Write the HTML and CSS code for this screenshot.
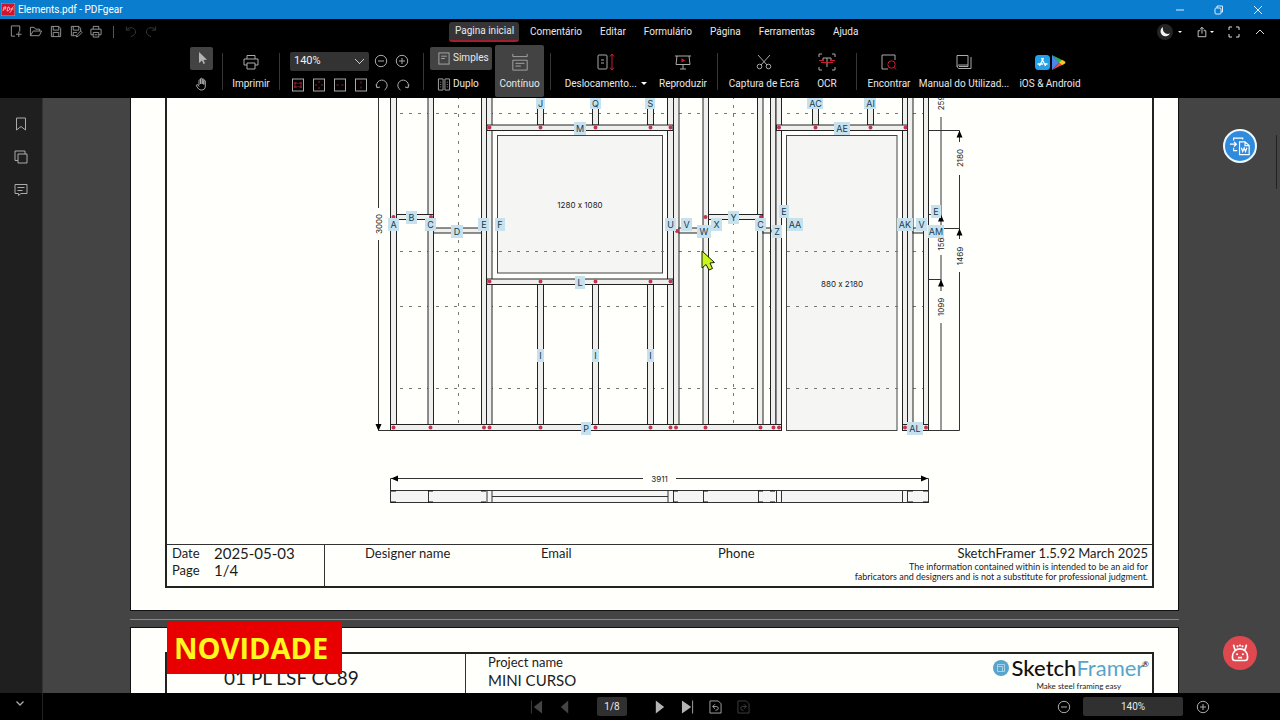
FILE: index.html
```html
<!DOCTYPE html>
<html lang="pt">
<head>
<meta charset="utf-8">
<title>Elements.pdf - PDFgear</title>
<link rel="stylesheet" href="styles.css">
</head>
<body>
<svg class="defs" aria-hidden="true">
  <defs>
    <symbol id="zoom-out" viewBox="0 0 14 14"><circle cx="7" cy="7" r="5.7"/><path d="M4 7h6"/></symbol>
    <symbol id="zoom-in" viewBox="0 0 14 14"><circle cx="7" cy="7" r="5.7"/><path d="M4 7h6M7 4v6"/></symbol>
    <symbol id="printer" viewBox="0 0 16 16"><path d="M4 5V1.500h8V5M4 11H1V5h14v6h-3M4 9h8v6H4z"/></symbol>
  </defs>
</svg>
<div class="app">
  <header class="titlebar">
    <svg class="app-icon" viewBox="0 0 14 13"><rect width="14" height="13" rx="1" fill="#d3122c"/><path d="M2 8l1-4h2L4.500 6H3M6 8l1-4c3 0 2 4-1 4M8.500 9.500c2 0 2-5 4-6M9.500 6h3" fill="none" stroke="#ffd5d8" stroke-width=".8"/></svg>
    <span class="title">Elements.pdf - PDFgear</span>
    <div class="window-buttons">
      <button aria-label="Minimizar"><svg viewBox="0 0 12 12"><path d="M2 6h8"/></svg></button>
      <button aria-label="Restaurar"><svg viewBox="0 0 12 12"><rect x="2" y="4" width="6" height="6" rx="1"/><path d="M4 4V2h5.500v6H8"/></svg></button>
      <button aria-label="Fechar"><svg viewBox="0 0 12 12"><path d="M2 2l8 8M10 2l-8 8"/></svg></button>
    </div>
  </header>

  <div class="menubar">
    <div class="quick">
      <button aria-label="Novo"><svg viewBox="0 0 14 14"><path d="M6 12H2V1h9v6M10 7v6M7 10h6"/></svg></button>
      <button aria-label="Abrir"><svg viewBox="0 0 14 14"><path d="M1 11.500V2.500h4l1.500 2H11v2M1 11.500l3-5h9l-2.500 5z"/></svg></button>
      <button aria-label="Guardar"><svg viewBox="0 0 14 14"><path d="M2 1.500h8l2 2v9H2zM4 1.500v4h6v-4M4 12v-4h6v4"/></svg></button>
      <button aria-label="Guardar como"><svg viewBox="0 0 14 14"><path d="M7 11.500H2v-10h8l2 2v3M4 1.500v4h6v-4M4 11V8h4M7.500 13l.5-2.500 4-4L13.500 8l-4 4z"/></svg></button>
      <button aria-label="Imprimir"><svg viewBox="0 0 14 14"><path d="M4 4.500v-3h6v3M4 10.500H1.500v-6h11v6H10M4 8h6v5H4zM5.500 10.500h3"/></svg></button>
      <span class="quick-line"></span>
      <button class="dim" aria-label="Anular"><svg viewBox="0 0 14 14"><path d="M2 1.500v4h4M2 5.500c4-5 10-2 10 2 0 2-2 4-5 5"/></svg></button>
      <button class="dim" aria-label="Refazer"><svg viewBox="0 0 14 14"><path d="M12 1.500v4H8M12 5.500c-4-5-10-2-10 2 0 2 2 4 5 5"/></svg></button>
    </div>
    <nav class="tabs">
      <button class="tab active">Pagina inicial</button>
      <button class="tab">Comentário</button>
      <button class="tab">Editar</button>
      <button class="tab">Formulário</button>
      <button class="tab">Página</button>
      <button class="tab">Ferramentas</button>
      <button class="tab">Ajuda</button>
    </nav>
    <div class="menu-right">
      <button class="theme" aria-label="Tema"><svg class="moon" viewBox="0 0 16 16"><circle class="disc" cx="8" cy="8" r="8"/><path class="crescent" d="M6 3a5 5 0 1 0 7 6.500C9 11 5 8 6 3z"/></svg><span class="caret"></span></button>
      <button class="share" aria-label="Partilhar"><svg viewBox="0 0 12 14"><path d="M4 5.500H1.500v7h9v-7H8M6 9V1.500M3.500 4L6 1.500 8.500 4"/></svg><span class="caret small"></span></button>
      <button aria-label="Ecrã inteiro"><svg viewBox="0 0 12 12"><path d="M1 4V1h3M8 1h3v3M11 8v3H8M4 11H1V8"/></svg></button>
      <button aria-label="Recolher"><svg viewBox="0 0 12 12"><path d="M2 8l4-4 4 4"/></svg></button>
    </div>
  </div>

  <div class="ribbon">
    <div class="pointer-group">
      <button class="mini on" aria-label="Selecionar"><svg viewBox="0 0 14 14"><path class="solid" d="M4 1v11l3-2.500 1.500 3.500 1.500-.7-1.500-3.300 3.500-.3z"/></svg></button>
      <button class="mini" aria-label="Mover"><svg viewBox="0 0 14 14"><path d="M4 8V3.500c0-1 1.500-1 1.500 0V7 2c0-1 1.700-1 1.700 0v5-4.500c0-1 1.600-1 1.600 0V7.500 4c0-1 1.500-1 1.500 0v5c0 3-1.500 4-4 4-2 0-3-1-4.800-4C1 8 2 7 3 8l1 1.500"/></svg></button>
    </div>
    <span class="sep"></span>
    <button class="tool w44"><svg viewBox="0 0 16 16"><use href="#printer"/></svg><span>Imprimir</span></button>
    <span class="sep"></span>
    <div class="zoom-group">
      <div class="row">
        <select class="zoom-select" aria-label="Zoom"><option>140%</option></select>
        <button class="zbtn" aria-label="Reduzir"><svg viewBox="0 0 14 14"><use href="#zoom-out"/></svg></button>
        <button class="zbtn" aria-label="Ampliar"><svg viewBox="0 0 14 14"><use href="#zoom-in"/></svg></button>
      </div>
      <div class="row fits">
        <button class="zbtn" aria-label="Tamanho real"><svg viewBox="0 0 14 14"><rect x="1.500" y="1" width="11" height="12"/><path class="red" d="M4 4v6M10 4v6M3 5h3M8 5h3M3 9h3M8 9h3M7 5v1M7 8v1"/></svg></button>
        <button class="zbtn" aria-label="Ajustar página"><svg viewBox="0 0 14 14"><rect x="1.500" y="1" width="11" height="12"/><path class="red" d="M6 4h2M6 10h2M4 6v2M10 6v2"/></svg></button>
        <button class="zbtn" aria-label="Ajustar largura"><svg viewBox="0 0 14 14"><rect x="1.500" y="1" width="11" height="12"/><path class="red" d="M3.500 7h2M8.500 7h2"/></svg></button>
        <button class="zbtn" aria-label="Ajustar altura"><svg viewBox="0 0 14 14"><rect x="1.500" y="1" width="11" height="12"/><path class="red" d="M7 3.500v2M7 8.500v2"/></svg></button>
        <button class="zbtn" aria-label="Rodar à esquerda"><svg viewBox="0 0 14 14"><path d="M2 9.500a5.300 5.300 0 1 1 7.500 2.500M1 6.500l1 3.300L5 9"/></svg></button>
        <button class="zbtn" aria-label="Rodar à direita"><svg viewBox="0 0 14 14"><path d="M12 9.500A5.300 5.300 0 1 0 4.500 12M13 6.500l-1 3.300L9 9"/></svg></button>
      </div>
    </div>
    <span class="sep"></span>
    <div class="view-group">
      <button class="view on"><svg viewBox="0 0 14 14"><rect x="1.500" y="1" width="11" height="12"/><path d="M4 4.500h6M4 7h4"/></svg>Simples</button>
      <button class="view"><svg viewBox="0 0 14 14"><path d="M1 1h5v12H1zM8 1h5v12H8zM3 4.500h1M3 7h1M3 9.500h1M10 4.500h1M10 7h1M10 9.500h1"/></svg>Duplo</button>
    </div>
    <button class="tool on w49"><svg class="big" viewBox="0 0 18 20"><path d="M1 1v3h16V1M1 19V8h16v11zM4 11.500h10M4 14.500h6"/></svg><span>Contínuo</span></button>
    <span class="sep"></span>
    <button class="tool w98"><svg class="big" viewBox="0 0 18 18"><rect x="1" y="2" width="9" height="14" rx="1"/><path d="M4 7h3M4 10h3"/><path class="red" d="M15 1v16M13 3.500L15 1l2 2.500M13 14.500l2 2.500 2-2.500"/></svg><span>Deslocamento... <i class="caret"></i></span></button>
    <button class="tool w56"><svg viewBox="0 0 16 16"><path d="M0 2h16M2 2l-1 8.500h14L14 2M8 10.500V15M5 15h6"/><path class="redfill" d="M6.500 4v4.500l3.500-2z"/></svg><span>Reproduzir</span></button>
    <span class="sep"></span>
    <button class="tool w80"><svg viewBox="0 0 16 16"><path d="M2 1l9 10M14 1L5 11"/><circle cx="3.500" cy="12.500" r="2.300"/><circle cx="12.500" cy="12.500" r="2.300"/></svg><span>Captura de Ecrã</span></button>
    <button class="tool w46"><svg class="big" viewBox="0 0 18 18"><path d="M1 4V1h3M14 1h3v3M17 14v3h-3M4 17H1v-3M5 7V5h8v2M9 5v9"/><path class="red" d="M1 7.500h5M12 7.500h5M3 9.500h12"/></svg><span>OCR</span></button>
    <span class="sep"></span>
    <button class="tool w52"><svg viewBox="0 0 16 16"><path d="M7 15H1V1h13v5"/><path class="red" d="M13 13.500l2 2"/><circle class="red" cx="10.500" cy="10.500" r="3.700"/></svg><span>Encontrar</span></button>
    <button class="tool w98"><svg viewBox="0 0 16 16"><path d="M1 13V1.500h11V11H3c-2 0-2 3.500 0 3.500h12V3M3 12.500h9V11"/></svg><span>Manual do Utilizad...</span></button>
    <button class="tool w74"><svg class="stores" viewBox="0 0 32 17"><rect x="1" y="1" width="15" height="15" rx="3.500" fill="#23a0ea" stroke="none"/><path d="M9.500 4L5.500 12M7.500 4l4 8M3.500 10h5.500M11 10h2.500" stroke="#fff" stroke-width="1.300"/><path d="M18 1v15l7-7.500z" fill="#4c84ee" stroke="none"/><path d="M18 1l10 5-3 3z" fill="#25b15f" stroke="none"/><path d="M18 16l10-5-3-2.500z" fill="#e94a42" stroke="none"/><path d="M28 5.800l3 1.700q1 1 0 2l-3 1.700-3-2.700z" fill="#fbc323" stroke="none"/></svg><span>iOS &amp; Android</span></button>
  </div>

  <div class="workspace">
    <aside class="sidebar">
      <button aria-label="Marcadores"><svg viewBox="0 0 14 14"><path d="M2.500 1h9v12L7 9.500 2.500 13z"/></svg></button>
      <button aria-label="Miniaturas"><svg viewBox="0 0 14 14"><path d="M4 4h9v9H4zM4 10.500H1V1h10v3"/></svg></button>
      <button aria-label="Comentários"><svg viewBox="0 0 14 14"><path d="M1 1.500h12v9H7l-2.500 2v-2H1zM3.500 4.500h7M3.500 7.500h5"/></svg></button>
    </aside>

    <main class="viewer">
      <section class="page first">
        <div class="frame">
          <svg class="drawing" viewBox="167 98 985 446" role="img" aria-label="Alçado do painel">
            <g class="lines guides">
              <path d="M391 113.500H929"/>
              <path d="M458.500 96V424M733.500 96V424"/>
            </g>
            <g class="opening">
              <rect x="497.500" y="135.500" width="165" height="137.500"/>
              <rect x="786.500" y="135.500" width="110.500" height="295"/>
            </g>
            <path class="guide-over" d="M391 251.500H929M391 306.500H929M391 388.500H929"/>
            <g class="steel">
              <rect x="390.500" y="90" width="6" height="335"/><rect x="428" y="90" width="5.500" height="335"/>
              <rect x="481.500" y="90" width="5" height="335"/><rect x="486.500" y="90" width="5.500" height="335"/>
              <rect x="537.500" y="90" width="6" height="35"/><rect x="592.500" y="90" width="6" height="35"/><rect x="647.500" y="90" width="6" height="35"/>
              <rect x="537.500" y="284" width="6" height="141"/><rect x="592.500" y="284" width="6" height="141"/><rect x="647.500" y="284" width="6" height="141"/>
              <rect x="667.500" y="90" width="6" height="335"/><rect x="673.500" y="90" width="5.500" height="335"/>
              <rect x="703" y="90" width="5.500" height="335"/><rect x="757.500" y="90" width="5.500" height="335"/>
              <rect x="770.500" y="90" width="5.500" height="335"/><rect x="776" y="90" width="5.500" height="335"/>
              <rect x="812.500" y="90" width="6" height="35"/><rect x="867.500" y="90" width="6" height="35"/>
              <rect x="902.500" y="90" width="5" height="335"/><rect x="907.500" y="90" width="5.500" height="335"/><rect x="923.500" y="90" width="5" height="335"/>
              <rect x="487" y="125" width="186" height="5.500"/><rect x="487" y="279" width="186" height="5.500"/><rect x="776.500" y="125" width="131" height="5.500"/>
              <rect x="396.500" y="214.500" width="37" height="5"/><rect x="433.500" y="228" width="48" height="5"/><rect x="679" y="228" width="24" height="5"/>
              <rect x="708.500" y="214.500" width="54" height="5"/><rect x="763" y="228" width="7.500" height="5"/><rect x="913" y="228" width="10.500" height="5"/>
              <rect x="390.500" y="424.500" width="391" height="6"/><rect x="902.500" y="424.500" width="26" height="6"/>
            </g>
            <g class="plan">
              <rect x="390.500" y="490.500" width="538" height="12"/>
              <path d="M492 496.500h176M428.500 490.500v12M487 490.500v12M492 490.500v12M668 490.500v12M673.500 490.500v12M703.500 490.500v12M758.500 490.500v12M776.500 490.500v12M781.500 490.500v12M902.500 490.500v12M907.500 490.500v12"/>
              <path class="heavy" d="M391 491h5M391 502h5M428 491h5M428 502h5M481 491h5M481 502h5M673 491h5M673 502h5M703 491h5M703 502h5M758 491h5M758 502h5M770 491h5M770 502h5M908 491h5M908 502h5M923 491h5M923 502h5"/>
            </g>
            <g class="dims">
              <path d="M378.500 90V208M378.500 240V430.500H391M390.500 503V478.500H643M676 478.500H928.500V503"/>
              <path d="M929 130.500H959.500V142M959.500 175V239M929 228.500H959.500M959.500 272V430.500H929M941 117V239M929 214.500H941M941 255V291M929 279.500H941M941 323V430"/>
              <path class="arrow" d="M375.500 424h6l-3 7zM391 478.500l7-3v6zM928 478.500l-7-3v6zM959.500 130.500l-3 7h6zM959.500 228.500l-3 7h6zM941 214.500l-3 7h6zM941 279.500l-3 7h6z"/>
            </g>
            <g class="rivets">
              <path d="M393.500 427.500h0M430.500 427.500h0M484 427.500h0M489.500 427.500h0M540.500 427.500h0M595.500 427.500h0M650.500 427.500h0M670.500 427.500h0M676 427.500h0M705.500 427.500h0M760.500 427.500h0M773.500 427.500h0M779 427.500h0M905 427.500h0M926 427.500h0"/>
              <path d="M489.500 127.500h0M540.500 127.500h0M595.500 127.500h0M650.500 127.500h0M670.500 127.500h0M779 127.500h0M815.500 127.500h0M870.500 127.500h0M905.500 127.500h0M489.500 281.500h0M540.500 281.500h0M595.500 281.500h0M650.500 281.500h0M670.500 281.500h0M393.500 217h0M431 217h0M705.500 217h0M761 217h0M677 231h0M773 231h0"/>
            </g>
            <g class="measures">
              <text x="580" y="208">1280 x 1080</text><text x="842" y="287">880 x 2180</text><text x="659.500" y="482">3911</text>
              <text transform="translate(382 224) rotate(-90)">3000</text>
              <text transform="translate(963 158) rotate(-90)">2180</text>
              <text transform="translate(963 256) rotate(-90)">1469</text>
              <text transform="translate(944 307) rotate(-90)">1099</text>
              <text transform="translate(944 244) rotate(-90)">156</text>
              <text transform="translate(944 103) rotate(-90)">259</text>
            </g>
            <g class="tag-boxes">
              <path d="M536 97h9v12h-9zM590 97h11v12h-11zM645 97h10v12h-10zM807 97h16v12h-16zM864 97h12v12h-12z"/>
              <path d="M574 122h12v13h-12zM834 122h16v13h-16zM388 218h11v13h-11zM406 211h11v13h-11zM425 218h11v13h-11zM451 225h12v13h-12zM478 218h11v13h-11zM495 218h10v13h-10z"/>
              <path d="M575 276h10v13h-10zM537 349h7v13h-7zM592 349h7v13h-7zM647 349h7v13h-7zM581 422h10v13h-10zM665 218h11v13h-11zM681 218h11v13h-11zM697 225h14v13h-14zM711 218h11v13h-11zM728 211h11v13h-11z"/>
              <path d="M755 218h11v13h-11zM772 225h10v13h-10zM779 205h10v13h-10zM787 218h16v13h-16zM897 218h16v13h-16zM916 218h11v13h-11zM928 225h16v13h-16zM931 205h10v13h-10zM907 422h16v13h-16z"/>
            </g>
            <g class="tags">
              <text x="540.500" y="107">J</text><text x="595.500" y="107">Q</text><text x="650.500" y="107">S</text><text x="815.500" y="107">AC</text><text x="870.500" y="107">AI</text>
              <text x="580" y="132">M</text><text x="842" y="132">AE</text><text x="393.500" y="228">A</text><text x="411.500" y="221">B</text><text x="430.500" y="228">C</text><text x="457" y="235">D</text><text x="484" y="228">E</text><text x="500" y="228">F</text>
              <text x="580" y="286">L</text><text x="540.500" y="359">I</text><text x="595.500" y="359">I</text><text x="650.500" y="359">I</text><text x="586" y="432">P</text><text x="670.500" y="228">U</text><text x="686.500" y="228">V</text><text x="704" y="235">W</text><text x="716.500" y="228">X</text><text x="733.500" y="221">Y</text>
              <text x="760.500" y="228">C</text><text x="777" y="235">Z</text><text x="784" y="215">E</text><text x="795" y="228">AA</text><text x="905" y="228">AK</text><text x="921.500" y="228">V</text><text x="936" y="235">AM</text><text x="936" y="215">E</text><text x="915" y="432">AL</text>
            </g>
            <path class="cursor" d="M702 251v17l4-3.500 3 5.500 3.500-1.500-2.500-5.500 4.500-.5z"/>
          </svg>
          <footer class="title-block">
            <dl class="sheet-info">
              <dt>Date</dt><dd>2025-05-03</dd>
              <dt>Page</dt><dd>1/4</dd>
            </dl>
            <div class="contacts"><span>Designer name</span><span>Email</span><span>Phone</span></div>
            <div class="legal">
              <p class="version">SketchFramer 1.5.92 March 2025</p>
              <p>The information contained within is intended to be an aid for</p>
              <p>fabricators and designers and is not a substitute for professional judgment.</p>
            </div>
          </footer>
        </div>
      </section>
      <hr class="page-line">
      <section class="page second">
        <div class="frame">
          <div class="sheet-name">01 PL LSF CC89</div>
          <div class="project"><p>Project name</p><p class="project-title">MINI CURSO</p></div>
          <div class="brand">
            <div class="wordmark"><svg viewBox="0 0 16 16"><circle cx="8" cy="8" r="8" fill="#58a4cc"/><path d="M4.500 4.500h7v7h-7zM4.500 6.500h5v5" fill="none" stroke="#a2d3ec"/></svg><span>Sketch<b>Framer</b></span><sup>®</sup></div>
            <p class="slogan">Make steel framing easy</p>
          </div>
        </div>
        <strong class="banner">NOVIDADE</strong>
      </section>
      <button class="float word" aria-label="Converter para Word"><svg viewBox="0 0 24 24"><path d="M11.500 19.500v-12h6l4.500 4v10H11.500zM17.500 7.500v4H22M5 6V3.500h10V5M5 14v3h4M1 10h7M5.500 7.500L8 10l-2.500 2.500M13.500 14l1.500 4 1.500-4 1.500 4 1.500-4"/></svg></button>
      <button class="float robot" aria-label="Assistente"><svg viewBox="0 0 24 24"><path d="M3 18v-2a9 9 0 0 1 18 0v2q0 3-3 3H6q-3 0-3-3zM6 8L4.500 3.500M18 8l1.500-4.500M9.500 17.500h5"/><path class="dots" d="M8.500 13.500h0M15.500 13.500h0M4.500 3h0M19.500 3h0M9 4h0M15 4h0M12 3h0"/></svg></button>
      <span class="scroll-thumb"></span>
    </main>
  </div>

  <footer class="status">
    <div class="status-left"><button aria-label="Expandir"><svg viewBox="0 0 10 10"><path d="M1.500 3.500L5 7l3.500-3.500"/></svg></button></div>
    <div class="pager">
      <button class="dim" aria-label="Primeira"><svg viewBox="0 0 14 14"><path d="M1.500 0v14"/><path class="solid" d="M13 0v14L4 7z"/></svg></button>
      <button class="dim" aria-label="Anterior"><svg viewBox="0 0 14 14"><path class="solid" d="M11 0v14L3 7z"/></svg></button>
      <input class="page-input" aria-label="Página" value="1/8">
      <button aria-label="Seguinte"><svg viewBox="0 0 14 14"><path class="solid" d="M3 0v14l9-7z"/></svg></button>
      <button aria-label="Última"><svg viewBox="0 0 14 14"><path d="M12.500 0v14"/><path class="solid" d="M1 0v14l10-7z"/></svg></button>
      <button aria-label="Vista anterior"><svg viewBox="0 0 14 14"><path d="M1 .5v13h12V3.500l-3-3zM6.500 4L4 6.500 6.500 9M4 6.500h4q2 0 2 2t-3 2"/></svg></button>
      <button class="dim" aria-label="Vista seguinte"><svg viewBox="0 0 14 14"><path d="M1 .5v13h12V3.500l-3-3zM7.500 4L10 6.500 7.500 9M10 6.500H6q-2 0-2 2t3 2"/></svg></button>
    </div>
    <div class="status-zoom">
      <button aria-label="Reduzir"><svg viewBox="0 0 14 14"><use href="#zoom-out"/></svg></button>
      <input class="zoom-input" aria-label="Zoom" value="140%">
      <button aria-label="Ampliar"><svg viewBox="0 0 14 14"><use href="#zoom-in"/></svg></button>
    </div>
  </footer>
</div>
</body>
</html>
```

FILE: styles.css
```css
* { box-sizing: border-box; margin: 0; padding: 0; }
body { background: #000; color: #e8e8e8; font: 10px/14px Roboto, "Open Sans", sans-serif; overflow: hidden; }
button, input, select { font: inherit; color: inherit; background: none; border: 0; }
svg { fill: none; stroke: #aaa; stroke-width: 1; display: block; flex: none; }
.defs { position: absolute; width: 0; height: 0; }
.app { display: flex; flex-direction: column; height: 100vh; }
.solid { fill: #b4b4b4; stroke: none; }
.red { stroke: #c41f32; }
.redfill { fill: #d0213a; stroke: none; }
.dim { opacity: .38; }
.caret { display: inline-block; border: 3px solid transparent; border-top-color: #fff; border-bottom: 0; }
.caret.small { border-width: 2px 2px 0; }

.titlebar { display: flex; align-items: center; height: 19px; background: #0b7dce; color: #fff; padding: 0 14px 0 1px; flex: none; }
.app-icon { width: 14px; height: 13px; }
.title { margin-left: 3px; }
.window-buttons { display: flex; gap: 25px; margin-left: auto; }
.window-buttons button { width: 14px; }
.window-buttons svg { width: 12px; height: 12px; stroke: #d9eefc; }

.menubar { display: flex; align-items: center; height: 25px; flex: none; }
.quick { display: flex; align-items: center; gap: 6px; width: 449px; padding-left: 9px; }
.quick button { width: 14px; }
.quick svg { width: 14px; height: 13px; stroke: #999; }
.quick-line { width: 1px; height: 12px; margin: 0 4px; background: #555; }
.tabs { display: flex; }
.tab { height: 20px; padding: 0 9px; white-space: nowrap; }
.tab.active { padding: 0 6px; margin-right: 2px; background: #353537; border-bottom: 2px solid #a51d30; border-radius: 3px; width: 70px; }
.menu-right { display: flex; align-items: center; gap: 14px; margin-left: auto; padding-right: 14px; }
.menu-right button { display: flex; align-items: center; gap: 2px; }
.menu-right svg { width: 12px; height: 12px; stroke: #ddd; }
.menu-right .moon { width: 16px; height: 16px; }
.moon .disc { fill: #242424; stroke: none; }
.moon .crescent { fill: #f4f4f4; stroke: none; }
.theme .caret { border-width: 2px 2px 0; margin-left: 3px; }

.ribbon { display: flex; align-items: center; height: 54px; padding: 0 0 0 190px; flex: none; }
.sep { width: 1px; height: 37px; margin: 0 6px; background: #363636; flex: none; }
.pointer-group { width: 26px; display: grid; gap: 3px; }
.mini { width: 23px; height: 23px; display: grid; place-items: center; border-radius: 2px; }
.mini svg { width: 14px; height: 14px; }
.on { background: #434343; }
.tool { height: 52px; display: flex; flex-direction: column; align-items: center; justify-content: flex-end; gap: 6px; padding-bottom: 6px; border-radius: 2px; white-space: nowrap; flex: none; }
.tool svg { width: 16px; height: 16px; margin-bottom: 1px; }
.tool .big { width: 18px; height: 18px; margin-bottom: 0; }
.tool .stores { width: 32px; height: 17px; margin-bottom: 0; }
.tool .caret { margin: 0 0 2px 2px; }
.w44 { width: 44px; } .w46 { width: 46px; } .w49 { width: 49px; } .w52 { width: 52px; } .w56 { width: 56px; }
.w74 { width: 74px; } .w80 { width: 80px; } .w98 { width: 98px; }
.zoom-group { width: 131px; padding: 4px 4px 0; display: grid; gap: 5px; }
.row { display: flex; align-items: center; gap: 7px; height: 19px; }
.fits { padding-left: 1px; }
.zoom-select { width: 79px; height: 19px; padding: 0 4px; border-radius: 2px; font-size: 11px; color: #f0f0f0; appearance: none; background: linear-gradient(45deg, transparent 48%, #ccc 48% 56%, transparent 56%) 65px 7px / 5px 5px no-repeat, linear-gradient(-45deg, transparent 48%, #ccc 48% 56%, transparent 56%) 69px 7px / 5px 5px no-repeat, #333; }
.zoom-select + .zbtn { margin-left: -2px; }
.zbtn { width: 14px; height: 14px; }
.zbtn svg { width: 14px; height: 14px; }
.zbtn .red { stroke: #a01d2c; }
.view-group { width: 63px; margin-right: 2px; display: grid; gap: 3px; }
.view { display: flex; align-items: center; gap: 2px; width: 62px; height: 23px; padding-left: 7px; border-radius: 2px; }
.view svg { width: 14px; height: 13px; }

.workspace { flex: 1; display: flex; min-height: 0; }
.sidebar { width: 43px; background: #1f1f1f; display: flex; flex-direction: column; align-items: center; gap: 19px; padding-top: 19px; border-right: 1px solid #333; }
.sidebar svg { width: 14px; height: 14px; }
.viewer { position: relative; flex: 1; min-width: 0; overflow: hidden; background: #444; padding: 0 101px 0 87px; }
.page { background: #fffffc; color: #1c1c1c; border: 1px solid #111; padding: 0 24px 0 34px; font: 13px/17px Lato, sans-serif; }
.page.first { border-top: 0; padding-bottom: 22px; }
.frame { border: 2px solid #222; }
.first .frame { border-top: 0; }
.drawing { width: 100%; font: 9px Inter, sans-serif; font-feature-settings: "calt" 0; stroke: none; }
.guides path, .guide-over { stroke: #777; stroke-dasharray: 3 6; }
.opening rect { fill: #f5f5f4; stroke: #444; }
.steel rect { fill: #efefee; stroke: #222; }
.plan rect { fill: #f5f5f4; stroke: #333; }
.plan path { stroke: #333; }
.plan .heavy { stroke: #111; }
.dims path { stroke: #333; }
.dims .arrow { fill: #000; stroke: none; }
.rivets path { stroke: #c1344d; stroke-width: 4; stroke-linecap: round; }
.tag-boxes { fill: #c7e2ed; }
.tags, .measures { text-anchor: middle; }
.tags { fill: #173a55; font-size: 9px; }
.measures { fill: #222; font-size: 8px; }
.cursor { fill: #c8f51c; stroke: #16210a; }

.title-block { display: flex; border-top: 1px solid #333; height: 42px; }
.sheet-info { display: grid; grid-template-columns: 42px auto; width: 158px; padding-left: 5px; border-right: 1px solid #333; align-content: start; }
.sheet-info dd { font-size: 15px; }
.contacts { display: grid; grid-template-columns: 176px 177px auto; margin-left: 40px; }
.legal { margin-left: auto; padding-right: 4px; text-align: right; font-size: 9px; line-height: 10px; }
.version { font-size: 13px; line-height: 17px; }
.page-line { height: 1px; border: 0; background: #888; margin: 8px 0 7px; }
.page.second { position: relative; padding-top: 24px; height: 90px; }
.second .frame { display: flex; height: 80px; }
.sheet-name { width: 299px; border-right: 1px solid #333; padding: 13px 0 0 57px; font-size: 19px; line-height: 22px; }
.project { padding-left: 22px; }
.project-title { font-size: 15px; line-height: 18px; }
.brand { margin-left: auto; padding: 1px 3px 0 0; }
.wordmark { display: flex; align-items: center; gap: 3px; font-size: 22px; line-height: 26px; color: #111; font-weight: 500; }
.wordmark svg { width: 16px; height: 16px; stroke: none; }
.wordmark b { font-weight: 400; color: #58a4cc; }
.wordmark sup { font-size: 8px; line-height: 8px; align-self: flex-start; margin: 5px 0 0 -5px; }
.slogan { font-size: 8px; line-height: 10px; padding-left: 16px; text-align: center; }
.banner { position: absolute; left: 36px; top: -7px; padding: 0 14px 0 7px; background: #e80000; color: #fff81f; font: bold 29px/53px "Open Sans", sans-serif; }
.float { position: absolute; right: 23px; width: 34px; height: 34px; border-radius: 50%; display: grid; place-items: center; }
.float svg { width: 22px; height: 22px; stroke: #fff; stroke-width: 1.3; }
.word { top: 31px; background: #318bdc; border: 2px solid #edf7ff; }
.robot { bottom: 23px; background: #e04850; }
.float.robot svg { width: 20px; height: 20px; stroke-width: 2; }
.robot .dots { stroke-linecap: round; stroke-width: 2.500; }
.scroll-thumb { position: absolute; right: 3px; top: 37px; width: 1px; height: 54px; background: #222; }

.status { display: grid; grid-template-columns: 1fr auto 1fr; align-items: center; height: 27px; flex: none; }
.status button { width: 27px; display: grid; place-items: center; }
.status svg { width: 14px; height: 14px; }
.status .pager svg { width: 13px; height: 14px; }
.status-left { width: 43px; height: 27px; padding: 4px 0 0 6px; border-right: 1px solid #222; }
.status .status-left svg { width: 10px; height: 12px; stroke-width: 1.300; }
.pager { display: flex; align-items: center; gap: 1px; }
.page-input { width: 30px; height: 19px; margin: 0 18px; background: #303030; border-radius: 2px; text-align: center; }
.status-zoom { display: flex; align-items: center; gap: 6px; justify-self: end; padding-right: 64px; }
.zoom-input { width: 100px; height: 19px; background: #303030; border-radius: 2px; text-align: center; }
```
